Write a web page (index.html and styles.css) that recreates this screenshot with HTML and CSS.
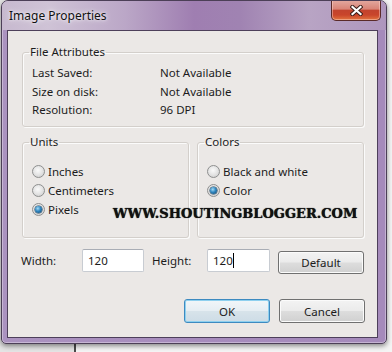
FILE: index.html
```html
<!DOCTYPE html>
<html lang="en">
<head>
    <meta charset="UTF-8">
    <title>Image Properties</title>
    <link rel="stylesheet" href="styles.css">
</head>
<body>
    <div class="window">
        <div class="titlebar">
            <span class="title">Image Properties</span>
            <div class="close-btn">
                <svg width="13" height="11" viewBox="0 0 13 11">
                    <path d="M2.5 2 L10.5 9 M10.5 2 L2.5 9" stroke="#3b1f1a" stroke-width="4.2" stroke-linecap="square"/>
                    <path d="M2.5 2 L10.5 9 M10.5 2 L2.5 9" stroke="#ffffff" stroke-width="2.2" stroke-linecap="square"/>
                </svg>
            </div>
        </div>
        <div class="frame">
            <div class="client">
                <fieldset class="group attrs">
                    <legend>File Attributes</legend>
                    <div class="attr-grid">
                        <span>Last Saved:</span><span>Not Available</span>
                        <span>Size on disk:</span><span>Not Available</span>
                        <span>Resolution:</span><span>96 DPI</span>
                    </div>
                </fieldset>

                <div class="group-row">
                    <fieldset class="group option-group">
                        <legend>Units</legend>
                        <div class="radio"><span class="dot"></span>Inches</div>
                        <div class="radio"><span class="dot"></span>Centimeters</div>
                        <div class="radio"><span class="dot checked"></span>Pixels</div>
                    </fieldset>
                    <fieldset class="group option-group">
                        <legend>Colors</legend>
                        <div class="radio"><span class="dot"></span>Black and white</div>
                        <div class="radio"><span class="dot checked"></span>Color</div>
                    </fieldset>
                </div>

                <div class="size-row">
                    <span class="size-label width-label">Width:</span>
                    <div class="field">120</div>
                    <span class="size-label height-label">Height:</span>
                    <div class="field">120<span class="caret"></span></div>
                    <button class="btn default-btn">Default</button>
                </div>

                <div class="actions">
                    <button class="btn primary">OK</button>
                    <button class="btn">Cancel</button>
                </div>

                <div class="watermark">WWW.SHOUTINGBLOGGER.COM</div>
            </div>
        </div>
    </div>
</body>
</html>
```

FILE: styles.css
```css
* {
    box-sizing: border-box;
}
body {
    margin: 0;
    width: 392px;
    height: 352px;
    overflow: hidden;
    background: linear-gradient(90deg, #e4e4e4 0, #e4e4e4 74px, #4a4a4a 74px, #4a4a4a 76px, #f4f4f4 76px);
    font-family: "Noto Sans", sans-serif;
    font-size: 11.5px;
    color: #1c1c1c;
}
.window {
    width: 386px;
    height: 344px;
    margin-left: 1px;
    border: 1px solid #4c3f57;
    border-radius: 7px 7px 5px 5px;
    background: linear-gradient(90deg, #ab93c0, #a78cbd 50%, #a58abb);
    box-shadow: 0 2px 5px rgba(0, 0, 0, 0.45), inset 0 0 0 1px rgba(255, 255, 255, 0.35);
    display: flex;
    flex-direction: column;
    overflow: hidden;
}
.titlebar {
    height: 29px;
    flex: none;
    position: relative;
    background: linear-gradient(90deg, #c7b9cf 0%, #cfc3d6 12%, #bba7c7 32%, #9f7eb1 50%, #a083b2 62%, #b8a4c4 80%, #ae96bd 100%);
}
.title {
    position: absolute;
    left: 7px;
    top: 7px;
    font-size: 12px;
    line-height: 16px;
    color: #111;
    text-shadow: 0 0 6px rgba(255, 255, 255, 0.9), 0 0 3px rgba(255, 255, 255, 0.8);
}
.close-btn {
    position: absolute;
    left: 329px;
    top: -1px;
    width: 50px;
    height: 21px;
    border: 1px solid #5a2a28;
    border-top: none;
    border-radius: 0 0 5px 5px;
    background: linear-gradient(#e3aaa1 0%, #d98477 45%, #c2432e 52%, #c9452b 75%, #e2743f 100%);
    box-shadow: inset 0 0 0 1px rgba(255, 220, 210, 0.45);
    display: flex;
    align-items: center;
    justify-content: center;
}
.close-btn svg {
    display: block;
    margin-top: 1px;
}
.frame {
    flex: 1;
    display: flex;
    padding: 0 8px 5px 5px;
}
.client {
    flex: 1;
    position: relative;
    border: 1px solid #4d3f5a;
    background: #ebe8e6;
}
.group {
    margin: 0;
    padding: 0 9px;
    border: 1px solid #d3cfcb;
    border-radius: 3px;
    box-shadow: inset 1px 1px 0 #fbfbfb, 1px 1px 0 #fbfbfb;
}
.group legend {
    padding: 0 1px;
    margin-left: -3px;
    line-height: 16px;
}
.attrs {
    margin: 13px 13px 0 14px;
    height: 83px;
}
.attr-grid {
    display: grid;
    grid-template-columns: 128px auto;
    line-height: 18.5px;
    padding-top: 4px;
}
.group-row {
    display: flex;
    gap: 8px;
    margin: 7px 13px 0 14px;
}
.option-group {
    width: 167px;
    height: 104px;
    padding-top: 12px;
}
.radio {
    display: flex;
    align-items: center;
    gap: 3px;
    height: 19px;
}
.dot {
    width: 13px;
    height: 13px;
    border-radius: 50%;
    border: 1px solid #8e8f8f;
    background: radial-gradient(circle at 45% 40%, #fafafa 0, #e6e6e6 45%, #c9c9c9 100%);
    position: relative;
    flex: none;
}
.dot.checked::after {
    content: "";
    position: absolute;
    left: 2px;
    top: 2px;
    width: 7px;
    height: 7px;
    border-radius: 50%;
    background: radial-gradient(circle at 40% 35%, #a6dcf6 0, #2f86c0 45%, #0d3f66 100%);
    box-shadow: 0 0 0 0.5px #1b3c55;
}
.size-row {
    display: flex;
    align-items: flex-start;
    margin-top: 11px;
    padding-left: 13px;
}
.size-label {
    line-height: 23px;
}
.width-label {
    width: 61px;
}
.height-label {
    width: 55px;
    margin-left: 8px;
}
.field {
    width: 62px;
    height: 23px;
    border: 1px solid #c8ccd2;
    border-top-color: #a9adb5;
    border-radius: 2px;
    background: #fff;
    padding-left: 5px;
    line-height: 21px;
    display: flex;
    align-items: center;
}
.field + .height-label + .field {
    width: 63px;
}
.caret {
    display: inline-block;
    width: 1px;
    height: 15px;
    background: #000;
}
.btn {
    width: 86px;
    height: 23px;
    padding: 0;
    border: 1px solid #707070;
    border-radius: 3px;
    background: linear-gradient(#f3f3f3 0%, #ebebeb 48%, #dddddd 52%, #d0d0d0 100%);
    box-shadow: inset 0 0 0 1px #fbfbfb;
    font-family: inherit;
    font-size: inherit;
    color: #1c1c1c;
}
.default-btn {
    margin-left: 8px;
    margin-top: 2px;
}
.actions {
    display: flex;
    justify-content: flex-end;
    gap: 9px;
    margin-top: 25px;
    padding-right: 12px;
}
.actions .btn {
    height: 24px;
}
.btn.primary {
    border-color: #3d8ac0;
    background: linear-gradient(#f1f6f9 0%, #e6eef3 48%, #d7e3ea 52%, #cddce6 100%);
    box-shadow: inset 0 0 0 1px #8ed0ef;
}
.watermark {
    position: absolute;
    left: 105px;
    top: 176px;
    font-family: "DejaVu Serif", serif;
    font-weight: bold;
    font-size: 13px;
    line-height: 14px;
    color: #111;
    white-space: nowrap;
    text-shadow: 0 0 1px #000, 1px 1px 1px rgba(255, 255, 255, 0.6);
}
```
